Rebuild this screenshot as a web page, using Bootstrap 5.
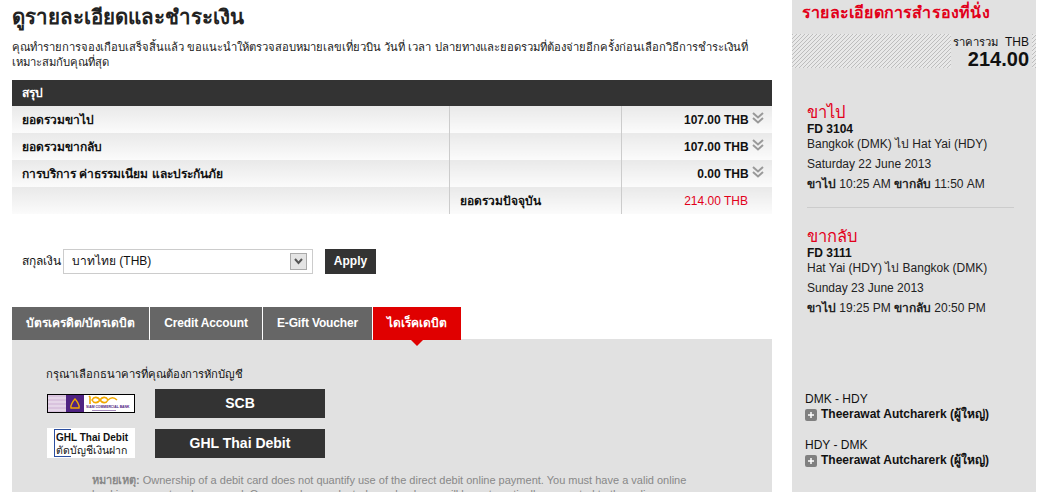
<!DOCTYPE html>
<html lang="th">
<head>
    <meta charset="UTF-8">
    <title>ดูรายละเอียดและชำระเงิน</title>
    <link href="https://cdn.jsdelivr.net/npm/bootstrap@5.3.0/dist/css/bootstrap.min.css" rel="stylesheet">
    <style>
        html, body { height: 492px; overflow: hidden; }
        body { font-family: "Liberation Sans", "Noto Sans", sans-serif; font-size: 12px; line-height: 15px; color: #111; background: #fff; }
        .page-main { width: 760px; margin-left: 12px; }
        .page-title { font-size: 20.5px; line-height: 22px; font-weight: 700; margin: 6px 0 0; color: #222; }
        .intro-text { margin: 12px 0 10px; font-size: 11.25px; line-height: 15px; color: #222; }

        .summary-table { width: 100%; border-collapse: collapse; table-layout: fixed; }
        .summary-table th { background: #333; color: #fff; height: 26px; padding: 0 10px; font-size: 12px; }
        .summary-table td { height: 27px; padding: 1px 10px 0; background: linear-gradient(#e9e9e9, #fbfbfb); font-weight: 700; vertical-align: middle; }
        .summary-table td + td { border-left: 1px solid #ccc; }
        .summary-table td.amount-cell { text-align: right; white-space: nowrap; padding-right: 8px; }
        .amount-cell svg { vertical-align: 0; }
        .summary-table td.total-red { color: #e2001a; font-weight: 400; padding-right: 24px; }

        .currency-row { margin: 35px 0 33px 10px; height: 25px; }
        .currency-box { width: 250px; height: 25px; border: 1px solid #ccc; margin-left: 2px; padding: 0 5px 0 8px; }
        .select-arrow { width: 17px; height: 17px; border: 1px solid #aaa; background: #e4e4e4; }
        .dark-btn { background: #333; color: #fff; font-weight: 700; border: 0; border-radius: 0; }
        .apply-btn { width: 51px; height: 25px; margin-left: 12px; font-size: 12px; padding: 0; }

        .pay-tabs { gap: 1px; height: 33px; }
        .pay-tab { background: #666; color: #fff; font-weight: 700; height: 33px; }
        .tab-card { width: 137px; }
        .tab-credit { width: 112px; letter-spacing: -.15px; }
        .tab-gift { width: 109px; letter-spacing: -.15px; }
        .tab-debit { width: 88px; }
        .pay-tab.on { background: #e00000; position: relative; }
        .pay-tab.on::after { content: ""; position: absolute; left: 50%; bottom: -6px; margin-left: -6px; border: 6px solid transparent; border-bottom: 0; border-top-color: #e00000; }
        .pay-panel { background: #e1e1e1; height: 153px; padding: 28px 84px 0 34px; margin-top: -1px; overflow: hidden; }
        .lead-text { font-size: 11.25px; }
        .bank-row { width: 279px; margin-top: 7px; }
        .bank-row + .bank-row { margin-top: 10px; }
        .bank-logo { width: 88px; display: block; margin-left: 1px; }
        .bank-btn { width: 170px; height: 29px; font-size: 14px; line-height: 29px; text-align: center; }
        .scb-logo { height: 19px; }
        .ghl-logo { height: 30px; background: #fff; padding: 4px 0 0 9px; line-height: 12px; color: #111; position: relative; }
        .ghl-logo b { font-size: 10px; display: block; white-space: nowrap; }
        .ghl-logo span { font-size: 10.5px; display: block; white-space: nowrap; }
        .ghl-mark { position: absolute; left: 7px; top: 1px; width: 17px; height: 28px; border: 1px solid #2b4ea0; border-right: 0; }
        .note-text { margin: 15px 0 0 46px; font-size: 11px; color: #888; line-height: 14px; }

        .side-bar { width: 244px; margin-left: 20px; height: 492px; background: #e1e1e1; }
        .side-title { color: #e2001a; font-size: 16px; line-height: 20px; font-weight: 700; padding: 3px 0 0 10px; margin: 0; letter-spacing: .2px; }
        .hatch-band { height: 34px; margin-top: 11px; padding-right: 4px; background: repeating-linear-gradient(135deg, #bdbdbd 0 1px, #e8e8e8 1px 2.83px); }
        .total-box { width: 81px; background: #e1e1e1; text-align: right; padding: 1px 3px 0 0; line-height: 14px; white-space: nowrap; }
        .total-label { font-size: 11.25px; }
        .total-num { font-size: 20px; line-height: 21px; font-weight: 700; }
        .seg-first { margin-top: 34px; }
        .seg-block { padding-left: 15px; }
        .seg-head { color: #e2001a; font-size: 16.5px; line-height: 20px; margin: 0; font-weight: 400; }
        .seg-line { margin: 5px 0 0; line-height: 15px; color: #222; }
        .seg-flight { font-weight: 700; line-height: 13px; margin: 1px 0 0; }
        .seg-route { line-height: 15px; margin: 1px 0 0; color: #222; }
        .seg-rule { border-top: 1px solid #ccc; margin: 15px 22px 18px 15px; }
        .pax-block { padding-left: 13px; line-height: 15px; margin-top: 16px; }
        .pax-first { margin-top: 76px; }
        .pax-plus { width: 12px; height: 12px; background: #808080; border-radius: 2px; margin-right: 4px; }
    </style>
</head>
<body>

<div class="d-flex">
    <div class="page-main">
        <h1 class="page-title">ดูรายละเอียดและชำระเงิน</h1>
        <p class="intro-text">คุณทำรายการจองเกือบเสร็จสิ้นแล้ว ขอแนะนำให้ตรวจสอบหมายเลขเที่ยวบิน วันที่ เวลา ปลายทางและยอดรวมที่ต้องจ่ายอีกครั้งก่อนเลือกวิธีการชำระเงินที่<br>เหมาะสมกับคุณที่สุด</p>

        <table class="summary-table">
            <colgroup><col style="width:437px"><col style="width:172px"><col></colgroup>
            <tr><th colspan="3">สรุป</th></tr>
            <tr>
                <td>ยอดรวมขาไป</td><td></td>
                <td class="amount-cell">107.00 THB <svg width="12" height="12" viewBox="0 0 12 12" fill="none" stroke="#999" stroke-width="2"><path d="M1 1l5 4.500 5-4.500M1 6l5 4.500 5-4.500"/></svg></td>
            </tr>
            <tr>
                <td>ยอดรวมขากลับ</td><td></td>
                <td class="amount-cell">107.00 THB <svg width="12" height="12" viewBox="0 0 12 12" fill="none" stroke="#999" stroke-width="2"><path d="M1 1l5 4.500 5-4.500M1 6l5 4.500 5-4.500"/></svg></td>
            </tr>
            <tr>
                <td>การบริการ ค่าธรรมเนียม และประกันภัย</td><td></td>
                <td class="amount-cell">0.00 THB <svg width="12" height="12" viewBox="0 0 12 12" fill="none" stroke="#999" stroke-width="2"><path d="M1 1l5 4.500 5-4.500M1 6l5 4.500 5-4.500"/></svg></td>
            </tr>
            <tr>
                <td></td><td>ยอดรวมปัจจุบัน</td>
                <td class="amount-cell total-red">214.00 THB</td>
            </tr>
        </table>

        <div class="currency-row d-flex align-items-center">
            <span>สกุลเงิน</span>
            <div class="currency-box d-flex align-items-center justify-content-between">
                <span>บาทไทย (THB)</span>
                <span class="select-arrow d-flex align-items-center justify-content-center">
                    <svg width="9" height="7" viewBox="0 0 9 7" fill="none" stroke="#555" stroke-width="2"><path d="M1 1l3.500 4 3.500-4"/></svg>
                </span>
            </div>
            <button class="dark-btn apply-btn" type="button">Apply</button>
        </div>

        <div class="pay-tabs d-flex">
            <div class="pay-tab tab-card d-flex align-items-center justify-content-center">บัตรเครดิต/บัตรเดบิต</div>
            <div class="pay-tab tab-credit d-flex align-items-center justify-content-center">Credit Account</div>
            <div class="pay-tab tab-gift d-flex align-items-center justify-content-center">E-Gift Voucher</div>
            <div class="pay-tab tab-debit on d-flex align-items-center justify-content-center">ไดเร็คเดบิต</div>
        </div>
        <div class="pay-panel">
            <div class="lead-text">กรุณาเลือกธนาคารที่คุณต้องการหักบัญชี</div>
            <div class="bank-row d-flex justify-content-between align-items-center">
                <svg class="bank-logo scb-logo" viewBox="0 0 88 19">
                    <rect width="88" height="19" fill="#fff"/>
                    <rect x="1" y="1" width="18" height="17" fill="#d9c3de"/>
                    <path d="M1 4h18M1 8h18M1 12h18M1 16h18" stroke="#f1e8f3" stroke-width="1"/>
                    <rect x="19" y="1" width="18" height="17" fill="#4f2382"/>
                    <path d="M24 14c-1-3 3-8 4-9 1 1 5 6 4 9z" fill="none" stroke="#f2a900" stroke-width="1.500"/>
                    <path d="M42 2l1 1v7M45 6c2-4 6-3 8 0s6 4 8 0c-2-4-6-3-8 0s-6 4-8 0zM61 6c3-3 6-3 9 0" fill="none" stroke="#f2a900" stroke-width="1.600"/>
                    <text x="39" y="14" font-family="Liberation Sans" font-size="3.400" font-weight="700" fill="#4f2382">SIAM COMMERCIAL BANK</text>
                    <path d="M45 16.500h24" stroke="#a58cbc" stroke-width="1"/>
                    <rect x=".5" y=".5" width="87" height="18" fill="none" stroke="#000"/>
                </svg>
                <div class="dark-btn bank-btn">SCB</div>
            </div>
            <div class="bank-row d-flex justify-content-between align-items-center">
                <div class="bank-logo ghl-logo">
                    <i class="ghl-mark"></i>
                    <b>GHL Thai Debit</b>
                    <span>ตัดบัญชีเงินฝาก</span>
                </div>
                <div class="dark-btn bank-btn">GHL Thai Debit</div>
            </div>
            <p class="note-text"><b>หมายเหตุ:</b> Ownership of a debit card does not quantify use of the direct debit online payment. You must have a valid online banking account and password. Once you have selected your bank you will be automatically connected to the online banking log-in page.</p>
        </div>
    </div>

    <div class="side-bar">
        <h2 class="side-title">รายละเอียดการสำรองที่นั่ง</h2>
        <div class="hatch-band d-flex justify-content-end">
            <div class="total-box">
                <div><span class="total-label">ราคารวม</span> &nbsp;THB</div>
                <div class="total-num">214.00</div>
            </div>
        </div>
        <div class="seg-block seg-first">
            <h3 class="seg-head">ขาไป</h3>
            <div class="seg-flight">FD 3104</div>
            <div class="seg-route">Bangkok (DMK) ไป Hat Yai (HDY)</div>
            <p class="seg-line">Saturday 22 June 2013</p>
            <p class="seg-line"><b>ขาไป</b> 10:25 AM <b>ขากลับ</b> 11:50 AM</p>
        </div>
        <div class="seg-rule"></div>
        <div class="seg-block">
            <h3 class="seg-head">ขากลับ</h3>
            <div class="seg-flight">FD 3111</div>
            <div class="seg-route">Hat Yai (HDY) ไป Bangkok (DMK)</div>
            <p class="seg-line">Sunday 23 June 2013</p>
            <p class="seg-line"><b>ขาไป</b> 19:25 PM <b>ขากลับ</b> 20:50 PM</p>
        </div>
        <div class="pax-block pax-first">
            <div>DMK - HDY</div>
            <div class="d-flex align-items-center"><svg class="pax-plus" viewBox="0 0 12 12"><path d="M6 3v6M3 6h6" stroke="#fff" stroke-width="1.500"/></svg><b>Theerawat Autcharerk (ผู้ใหญ่)</b></div>
        </div>
        <div class="pax-block">
            <div>HDY - DMK</div>
            <div class="d-flex align-items-center"><svg class="pax-plus" viewBox="0 0 12 12"><path d="M6 3v6M3 6h6" stroke="#fff" stroke-width="1.500"/></svg><b>Theerawat Autcharerk (ผู้ใหญ่)</b></div>
        </div>
    </div>
</div>

<script src="https://cdn.jsdelivr.net/npm/bootstrap@5.3.0/dist/js/bootstrap.bundle.min.js"></script>
</body>
</html>
